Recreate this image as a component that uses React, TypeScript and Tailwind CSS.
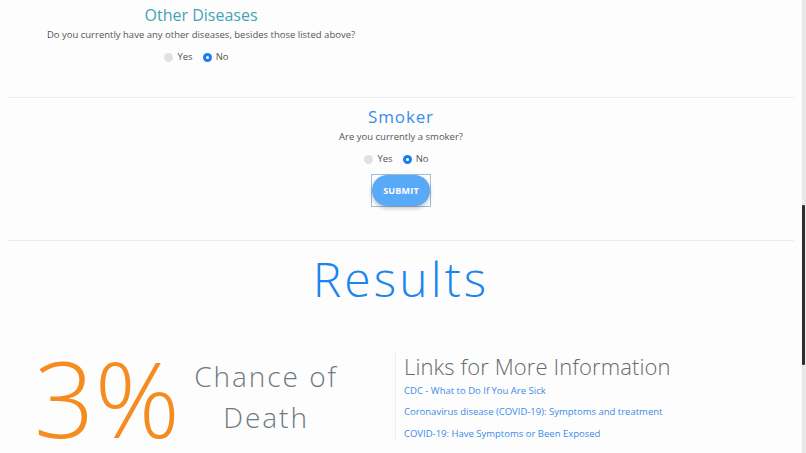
import React from "react";

function Radio({ label, checked }: { label: string; checked?: boolean }) {
  return (
    <label className="flex items-center gap-[4px]">
      {checked ? (
        <span className="flex h-[9px] w-[9px] items-center justify-center rounded-full bg-[#1a7df0]">
          <span className="h-[3px] w-[3px] rounded-full bg-white" />
        </span>
      ) : (
        <span className="h-[9px] w-[9px] rounded-full bg-[#dfe1e4]" />
      )}
      <span className="text-[9.5px] leading-[14px] text-[#555]">{label}</span>
    </label>
  );
}

function Question({ title, titleClass, text }: { title: string; titleClass: string; text: string }) {
  return (
    <div className="flex flex-col items-center">
      <h2 className={`leading-[22px] ${titleClass}`}>{title}</h2>
      <p className="mt-[3px] text-[9.5px] leading-[12px] text-[#555]">{text}</p>
      <div className="mt-[9px] flex items-center gap-[10px] pr-[9px]">
        <Radio label="Yes" />
        <Radio label="No" checked />
      </div>
    </div>
  );
}

const links = [
  "CDC - What to Do If You Are Sick",
  "Coronavirus disease (COVID-19): Symptoms and treatment",
  "COVID-19: Have Symptoms or Been Exposed",
];

export default function App() {
  return (
    <div className="flex h-[453px] w-[806px] overflow-hidden bg-[#fdfdfd] font-['Open_Sans',sans-serif]">
      <main className="flex-1 px-2">
        <section className="w-[386px] pt-[4px]">
          <Question
            title="Other Diseases"
            titleClass="text-[16px] text-[#45a3b3]"
            text="Do you currently have any other diseases, besides those listed above?"
          />
        </section>

        <hr className="mt-[33px] border-t border-[#ececec]" />

        <section className="pt-[8px]">
          <Question
            title="Smoker"
            titleClass="text-[17px] tracking-[0.05em] text-[#3a8ee6]"
            text="Are you currently a smoker?"
          />
          <div className="mt-[8px] flex justify-center">
            <div className="border border-[#a3bddb]">
              <button className="block h-[31px] w-[58px] rounded-full bg-[#58aaf6] text-[9px] font-bold tracking-[0.02em] text-white shadow-[0_2px_4px_rgba(0,0,0,0.25)]">
                SUBMIT
              </button>
            </div>
          </div>
        </section>

        <hr className="mt-[33px] border-t border-[#ececec]" />

        <h1 className="mt-[10px] text-center text-[48px] leading-[56px] font-light tracking-[0.065em] text-[#1a85f0]">
          Results
        </h1>

        <div className="mt-[35px] flex items-start">
          <div className="flex h-[110px] w-[387px] items-center">
            <span className="ml-[26px] text-[106px] leading-[110px] font-light text-[#f68b1f]">3%</span>
            <span className="ml-[11px] w-[150px] text-center text-[28px] leading-[41px] font-light tracking-[0.07em] text-[#707a82]">
              Chance of Death
            </span>
          </div>
          <div className="mt-[10px] border-l border-[#eeeeee] pt-[1px] pl-[8px]">
            <h3 className="text-[22px] leading-[26px] font-light tracking-[0.005em] text-[#6a6a6a]">
              Links for More Information
            </h3>
            <ul className="mt-[4.5px] flex flex-col gap-[7.5px]">
              {links.map((l) => (
                <li key={l} className="text-[9.5px] leading-[14px]">
                  <a className="text-[#3b8be6]">{l}</a>
                </li>
              ))}
            </ul>
          </div>
        </div>
      </main>
      <div className="flex w-[4px] flex-col bg-[#e9e9e9]">
        <div className="mt-[205px] h-[160px] w-[3px] rounded-[1px] bg-[#2f2f2f]" />
      </div>
    </div>
  );
}
